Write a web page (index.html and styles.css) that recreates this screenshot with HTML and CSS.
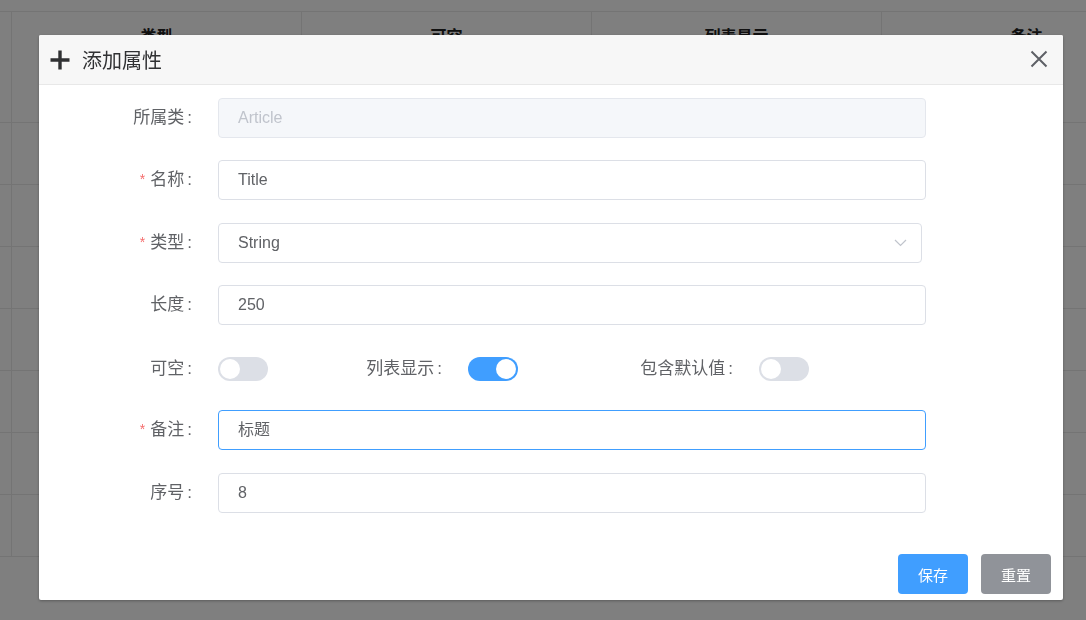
FILE: index.html
```html
<!DOCTYPE html>
<html lang="zh-CN">
<head>
<meta charset="utf-8">
<title>添加属性</title>
<link rel="stylesheet" href="styles.css">
</head>
<body>
<div class="page">
  <div class="grid">
    <div class="grow head">
      <div class="cell edge"></div>
      <div class="cell">类型</div>
      <div class="cell">可空</div>
      <div class="cell">列表显示</div>
      <div class="cell">备注</div>
    </div>
    <div class="grow"><div class="cell edge"></div><div class="cell"></div><div class="cell"></div><div class="cell"></div><div class="cell"></div></div>
    <div class="grow"><div class="cell edge"></div><div class="cell"></div><div class="cell"></div><div class="cell"></div><div class="cell"></div></div>
    <div class="grow"><div class="cell edge"></div><div class="cell"></div><div class="cell"></div><div class="cell"></div><div class="cell"></div></div>
    <div class="grow"><div class="cell edge"></div><div class="cell"></div><div class="cell"></div><div class="cell"></div><div class="cell"></div></div>
    <div class="grow"><div class="cell edge"></div><div class="cell"></div><div class="cell"></div><div class="cell"></div><div class="cell"></div></div>
    <div class="grow"><div class="cell edge"></div><div class="cell"></div><div class="cell"></div><div class="cell"></div><div class="cell"></div></div>
    <div class="grow"><div class="cell edge"></div><div class="cell"></div><div class="cell"></div><div class="cell"></div><div class="cell"></div></div>
  </div>
</div>

<div class="overlay">
  <div class="dialog">
    <div class="dlg-head">
      <svg class="plus" width="22" height="22" viewBox="0 0 22 22"><path d="M11 1.5V20.5M1.5 11H20.5" stroke="#303133" stroke-width="3.4" fill="none"/></svg>
      <span class="dlg-title">添加属性</span>
      <svg class="close" width="18" height="18" viewBox="0 0 18 18"><path d="M1.5 1.5L16.5 16.5M16.5 1.5L1.5 16.5" stroke="#5e6066" stroke-width="2" fill="none"/></svg>
    </div>
    <div class="dlg-body">
      <div class="item">
        <label class="lbl">所属类<span class="colon">:</span></label>
        <div class="input disabled">Article</div>
      </div>
      <div class="item">
        <label class="lbl"><span class="req">*</span>名称<span class="colon">:</span></label>
        <div class="input">Title</div>
      </div>
      <div class="item">
        <label class="lbl"><span class="req">*</span>类型<span class="colon">:</span></label>
        <div class="input select">String
          <svg class="chev" width="13" height="8" viewBox="0 0 13 8"><path d="M1 1L6.5 6.5L12 1" stroke="#c0c4cc" stroke-width="1.2" fill="none"/></svg>
        </div>
      </div>
      <div class="item">
        <label class="lbl">长度<span class="colon">:</span></label>
        <div class="input">250</div>
      </div>
      <div class="item switches">
        <label class="lbl">可空<span class="colon">:</span></label>
        <span class="switch"><span class="knob"></span></span>
        <label class="lbl l2">列表显示<span class="colon">:</span></label>
        <span class="switch on"><span class="knob"></span></span>
        <label class="lbl l3">包含默认值<span class="colon">:</span></label>
        <span class="switch"><span class="knob"></span></span>
      </div>
      <div class="item">
        <label class="lbl"><span class="req">*</span>备注<span class="colon">:</span></label>
        <div class="input focus">标题</div>
      </div>
      <div class="item">
        <label class="lbl">序号<span class="colon">:</span></label>
        <div class="input">8</div>
      </div>
      <div class="footer">
        <button class="btn primary">保存</button>
        <button class="btn info">重置</button>
      </div>
    </div>
  </div>
</div>
</body>
</html>
```

FILE: styles.css
```css
* { box-sizing: border-box; }
html, body {
  margin: 0;
  padding: 0;
  width: 1086px;
  height: 620px;
  overflow: hidden;
  background: #fff;
  font-family: "Liberation Sans", "Noto Sans CJK SC", sans-serif;
}
.page {
  width: 1086px;
  height: 620px;
  overflow: hidden;
  padding-top: 11px;
}
.grid {
  width: 1171px;
  border-top: 1px solid #e9e9e9;
}
.grow {
  display: flex;
  height: 62px;
  border-bottom: 1px solid #e9e9e9;
}
.grow.head {
  height: 111px;
}
.cell {
  width: 290px;
  flex: none;
  border-left: 1px solid #e9e9e9;
  text-align: center;
  font-size: 16px;
  font-weight: bold;
  color: #222;
  line-height: 24px;
  padding-top: 13px;
}
.cell.edge {
  width: 11px;
  border-left: none;
}
.overlay {
  position: fixed;
  left: 0;
  top: 0;
  width: 1086px;
  height: 620px;
  background: rgba(0, 0, 0, 0.5);
  padding: 35px 0 0 39px;
}
.dialog {
  width: 1024px;
  height: 565px;
  background: #fff;
  border-radius: 2px;
  box-shadow: 0 1px 3px rgba(0, 0, 0, 0.3);
  display: flex;
  flex-direction: column;
  overflow: hidden;
}
.dlg-head {
  height: 50px;
  flex: none;
  background: #f7f7f7;
  border-bottom: 1px solid #e8e8e8;
  display: flex;
  align-items: center;
  padding: 0 15px 0 10px;
}
.plus {
  flex: none;
}
.dlg-title {
  margin-left: 11px;
  font-size: 20px;
  color: #303133;
  font-family: "Noto Sans CJK SC", sans-serif;
  flex: 1;
}
.close {
  flex: none;
  margin-top: -2px;
}
.dlg-body {
  flex: 1;
  display: flex;
  flex-direction: column;
  padding: 13px 12px 6px 0;
}
.item {
  display: flex;
  align-items: center;
  height: 40px;
  margin-bottom: 22px;
}
.item:nth-child(even) {
  margin-bottom: 23px;
}
.lbl {
  width: 179px;
  flex: none;
  text-align: right;
  padding-right: 26px;
  font-size: 17px;
  color: #606266;
  line-height: 40px;
}
.colon {
  margin-left: 3px;
}
.req {
  color: #f56c6c;
  font-size: 14px;
  margin-right: 5px;
  position: relative;
  top: -1px;
}
.input {
  width: 708px;
  height: 40px;
  border: 1px solid #dcdfe6;
  border-radius: 4px;
  padding: 0 19px;
  font-size: 16px;
  color: #606266;
  line-height: 38px;
  display: flex;
  align-items: center;
}
.input.disabled {
  background: #f5f7fa;
  border-color: #e4e7ed;
  color: #c0c4cc;
}
.input.select {
  width: 704px;
  justify-content: space-between;
  padding-right: 14px;
}
.input.focus {
  border-color: #409eff;
}
.item.switches {
  height: 42px;
  margin-bottom: 20px;
}
.lbl.l2 {
  width: 200px;
}
.lbl.l3 {
  width: 241px;
}
.switch {
  width: 50px;
  height: 24px;
  border-radius: 12px;
  background: #dcdfe6;
  flex: none;
  display: flex;
  align-items: center;
  padding: 0 2px;
}
.switch.on {
  background: #409eff;
  justify-content: flex-end;
}
.knob {
  width: 20px;
  height: 20px;
  border-radius: 50%;
  background: #fff;
}
.footer {
  margin-top: auto;
  display: flex;
  justify-content: flex-end;
  gap: 13px;
}
.btn {
  width: 70px;
  height: 40px;
  border: none;
  border-radius: 4px;
  color: #fff;
  font-size: 15px;
  font-family: "Noto Sans CJK SC", sans-serif;
  padding: 0;
}
.btn.primary { background: #409eff; }
.btn.info { background: #909399; }
```
